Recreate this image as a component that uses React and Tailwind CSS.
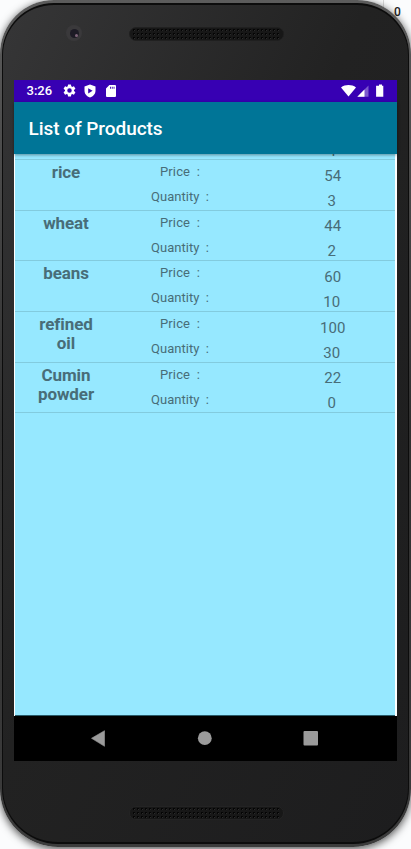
import React from "react";

const products = [
  { name: "rice", price: "54", quantity: "3" },
  { name: "wheat", price: "44", quantity: "2" },
  { name: "beans", price: "60", quantity: "10" },
  { name: "refined oil", price: "100", quantity: "30" },
  { name: "Cumin powder", price: "22", quantity: "0" },
];

function Grille({ id, edge }) {
  return (
    <svg width="155" height="14" viewBox="0 0 155 14" className="block">
      <defs>
        <pattern id={id} x="3" y="1" width="4" height="4" patternUnits="userSpaceOnUse">
          <rect x="1" y="1" width="2" height="2" fill="#050505" />
          <rect x="2" y="2" width="1" height="1" fill="#2b2b2b" />
        </pattern>
      </defs>
      <rect x="0.5" y="0.5" width="154" height="13" rx="6.5" fill="#171717" stroke={edge} strokeWidth="0.7" />
      <rect x="3" y="1" width="148" height="12" rx="4" fill={`url(#${id})`} />
    </svg>
  );
}

function StatusBar() {
  return (
    <div className="flex h-[22px] items-center bg-[#3700b3] text-white">
      <span className="ml-[12.5px] w-[26px] text-[13px] leading-[22px] font-medium whitespace-nowrap">3:26</span>
      <svg viewBox="0 0 24 24" className="mb-px ml-[9.5px] h-[15px] w-[15px]" fill="currentColor">
        <path d="M19.14 12.94c.04-.3.06-.61.06-.94s-.02-.64-.07-.94l2.03-1.58a.49.49 0 0 0 .12-.61l-1.92-3.32a.49.49 0 0 0-.59-.22l-2.39.96a7 7 0 0 0-1.62-.94l-.36-2.54A.48.48 0 0 0 13.92 2.4h-3.84a.48.48 0 0 0-.48.41l-.36 2.54c-.58.24-1.12.56-1.62.94l-2.39-.96a.48.48 0 0 0-.59.22L2.72 8.87c-.12.21-.07.47.12.61l2.03 1.58c-.05.3-.07.62-.07.94s.02.64.07.94l-2.03 1.58a.49.49 0 0 0-.12.61l1.92 3.32c.12.22.37.29.59.22l2.39-.96c.5.38 1.03.7 1.62.94l.36 2.54c.05.24.24.41.48.41h3.84c.24 0 .44-.17.47-.41l.36-2.54c.59-.24 1.13-.56 1.62-.94l2.39.96c.22.08.47 0 .59-.22l1.92-3.32a.48.48 0 0 0-.12-.61zM12 15.6a3.6 3.6 0 1 1 0-7.2 3.6 3.6 0 0 1 0 7.2z" />
      </svg>
      <svg viewBox="0 0 12 14" className="mb-px ml-[7px] h-[14px] w-[12px]" fill="currentColor">
        <path fillRule="evenodd" d="M6 .5l5.5 1.9v4.4c0 3-2.2 5.7-5.5 6.7C2.700 12.500.5 9.800.5 6.800V2.400zM4.200 4.200v5.200l4.400-2.600z" />
      </svg>
      <svg viewBox="0 0 10 12" className="ml-[9.5px] h-[12px] w-[10px]" fill="currentColor">
        <path fillRule="evenodd" d="M3.400 0H9a1 1 0 0 1 1 1v10a1 1 0 0 1-1 1H1a1 1 0 0 1-1-1V3.600zM4 1.700v2h.9v-2zm1.800 0v2h.9v-2zm1.800 0v2h.9v-2z" />
      </svg>
      <svg viewBox="0 0 44 14" className="mr-[12px] ml-auto h-[14px] w-[44px]" fill="currentColor">
        <path d="M0 3.400C4.300.2 10.700.2 15 3.400L7.500 12.500z" />
        <path d="M27.500 1.500v11.200H16.300z" opacity="0.35" />
        <path d="M23.500 5.500v7.200h-7.200z" />
        <path d="M36.500 1.800h1.300V.5h3v1.300h1.300v10.900h-7.200V1.800z" transform="translate(0.200 0)" />
      </svg>
    </div>
  );
}

function ProductRow({ name, price, quantity }) {
  return (
    <div className="flex h-[50.7px] items-start border-b border-[#82cbde] text-[#486d78]">
      <div className="flex w-[102px] justify-center pt-[2.9px]">
        <span className="w-[66px] text-center text-[17px] leading-[19.5px] font-bold tracking-[-0.1px]">{name}</span>
      </div>
      <div className="flex w-[126px] flex-col items-center text-[13px] whitespace-pre">
        <span className="mt-[3px] h-[18px] leading-[18px] tracking-[0.1px]">{"Price  :"}</span>
        <span className="mt-[7px] h-[18px] leading-[18px]">{"Quantity  :"}</span>
      </div>
      <div className="flex grow flex-col items-center text-[15px]">
        <span className="mt-[6.5px] ml-[27.5px] h-[18px] leading-[18px]">{price}</span>
        <span className="mt-[7px] ml-[25.5px] h-[18px] leading-[18px]">{quantity}</span>
      </div>
    </div>
  );
}

export default function App() {
  return (
    <div className="relative h-[849px] w-[411px] overflow-hidden bg-[#fbfcfd] font-[Roboto,sans-serif]">
      <div className="absolute top-[5px] left-[394px] text-[12px] leading-[14px] font-medium text-[#222]">0</div>
      <div className="absolute top-0 left-[383px] h-5 w-px bg-[#d9d9d9]" />
      <div className="relative h-[847px] w-[411px] rounded-t-[54px] rounded-b-[58px] bg-linear-to-b from-[#5c5c5c] via-[#303030] to-[#3c3c3c] px-[2px] pt-[3px] pb-[3px] shadow-[0_2px_8px_rgba(0,0,0,0.7)]">
        <div className="flex h-full flex-col rounded-t-[52px] rounded-b-[56px] border-x border-y-2 border-[#0c0c0c] bg-linear-to-br from-[#363637] via-[#222222] via-45% to-[#1d1d1e] px-[11px]">
          <div className="flex h-[75px] pt-[20px]">
            <div className="ml-[52px] flex h-4 w-4 items-center justify-center rounded-full bg-[#3a393b]">
              <div className="flex h-[9px] w-[9px] items-center justify-center rounded-full bg-[#1d1b25]">
                <div className="mt-1 ml-1 h-[3px] w-[3px] rounded-full bg-[#80667a]" />
              </div>
            </div>
            <div className="mt-[1.5px] ml-[47px]">
              <Grille id="top-holes" edge="#202020" />
            </div>
          </div>
          <div className="flex h-[681px] w-[383px] flex-col">
            <StatusBar />
            <div className="z-10 flex h-[52px] items-center bg-[#007597] pl-[14.5px] text-[19px] font-medium tracking-[-0.05px] text-white shadow-[0_1px_3px_rgba(0,0,0,0.4)]">
              <h1 className="pt-[2px]">List of Products</h1>
            </div>
            <div className="h-[562px] overflow-hidden bg-white pr-[2px] pl-px">
              <div className="h-full overflow-hidden border-b border-[#285a68] bg-[#96e8ff]">
                <div className="flex h-[6px] items-end justify-end border-b border-[#82cbde] pr-[59px] text-[15px] leading-[18px] text-[#486d78]">
                  <span className="-mb-px">4</span>
                </div>
                {products.map((p) => (
                  <ProductRow key={p.name} {...p} />
                ))}
              </div>
            </div>
            <div className="h-[45px] bg-black">
              <svg viewBox="0 0 383 45" className="h-[45px] w-[383px]" fill="#9b9b9b">
                <path d="M77.500 22.300L90.500 14.700v15.600z" stroke="#9b9b9b" strokeLinejoin="round" strokeWidth="0.6" />
                <circle cx="190.800" cy="22.200" r="6.900" />
                <rect x="289.500" y="15" width="14.500" height="14.500" rx="1" />
              </svg>
            </div>
          </div>
          <div className="mt-[45px] ml-[115px]">
            <Grille id="bottom-holes" edge="#282828" />
          </div>
        </div>
      </div>
    </div>
  );
}
